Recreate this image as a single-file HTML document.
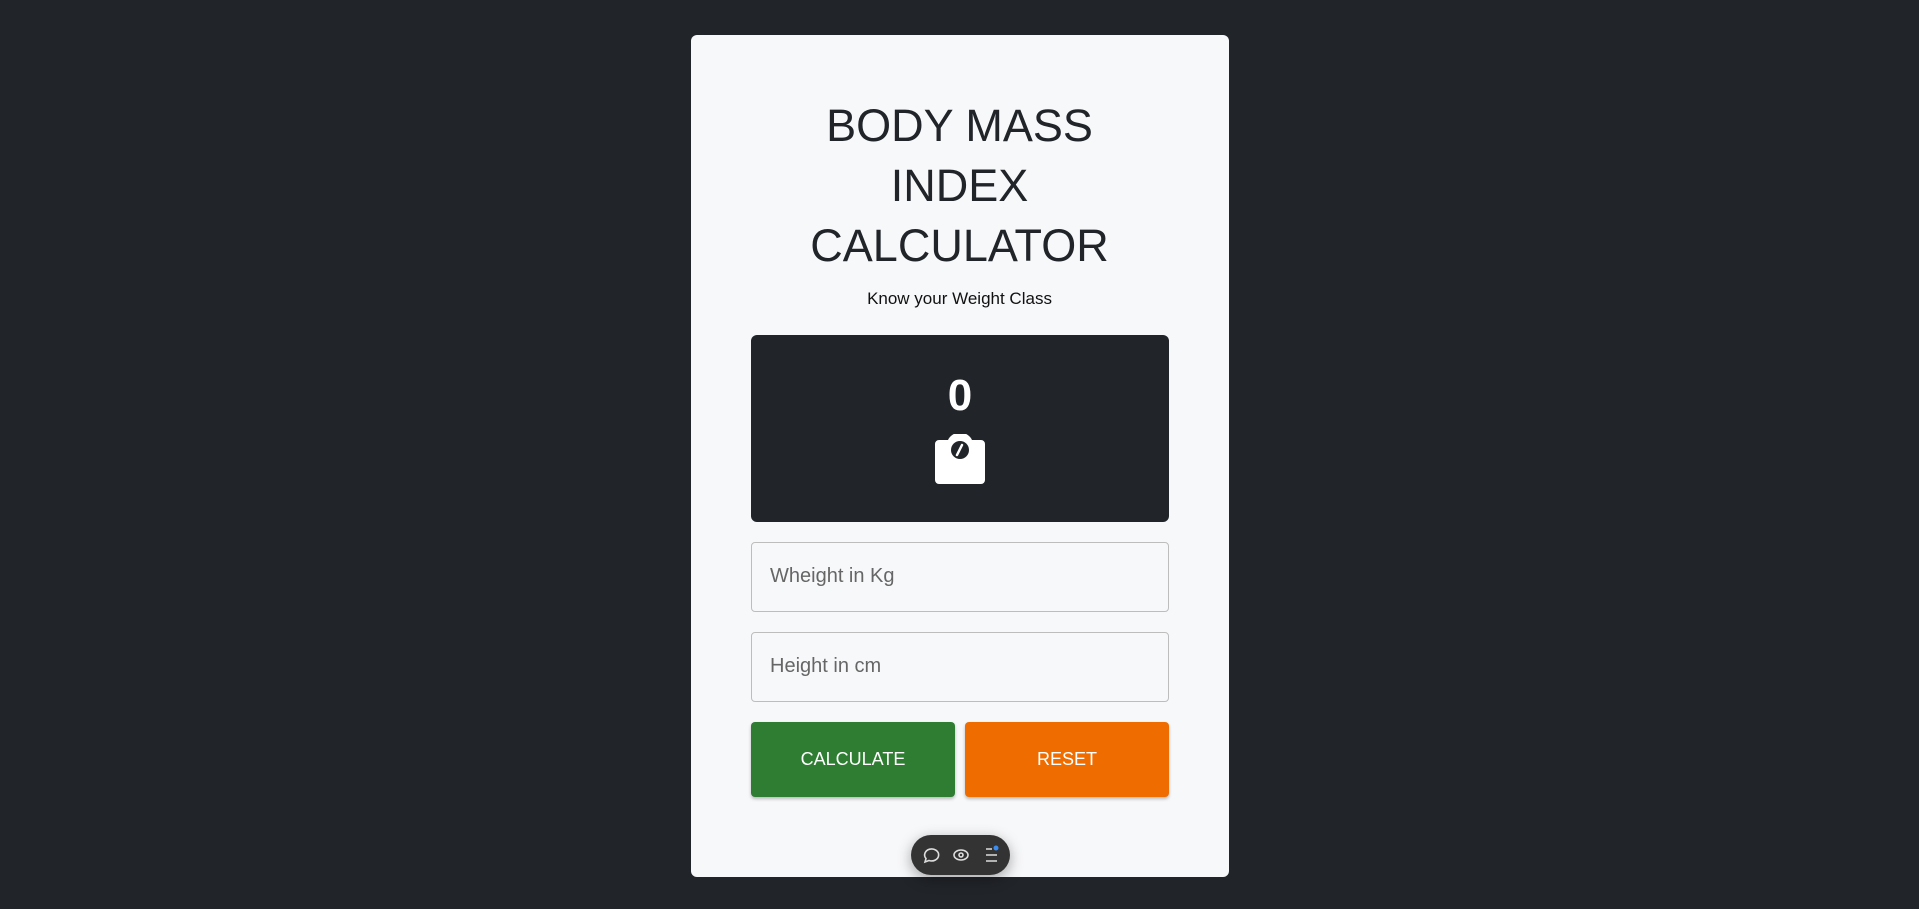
<!DOCTYPE html>
<html><head><meta charset="utf-8"><style>
html,body{margin:0;padding:0;width:1919px;height:909px;background:#212429;overflow:hidden;font-family:"Liberation Sans",sans-serif}
.card{position:absolute;left:691px;top:35px;width:538px;height:842px;background:#f7f8fa;border-radius:6px}
.t{position:absolute;left:0;width:1919px;text-align:center;color:#212429;font-size:45px;line-height:60px;top:96px}
.sub{position:absolute;left:0;width:1919px;text-align:center;top:289px;font-size:17px;color:#111}
.box{position:absolute;left:751px;top:335px;width:418px;height:187px;background:#212428;border-radius:6px}
.zero{position:absolute;left:0;width:418px;text-align:center;top:36px;color:#fff;font-size:44px;font-weight:bold}
.inp{position:absolute;left:751px;width:416px;height:68px;border:1px solid #bdbdbd;border-radius:4px;background:#f7f8fa;color:#666;font-size:20px;box-sizing:content-box}
.inp span{position:absolute;left:18px;top:22px}
.btn{position:absolute;top:722px;height:75px;border-radius:4px;color:#fff;font-size:18px;text-align:center;line-height:75px;box-shadow:0 2px 3px rgba(0,0,0,.25)}
.pill{position:absolute;left:911px;top:835px;width:99px;height:40px;border-radius:20px;background:#333;box-shadow:0 4px 14px rgba(0,0,0,.35)}
</style></head><body>
<div class="card"></div>
<div class="t">BODY MASS<br>INDEX<br>CALCULATOR</div>
<div class="sub">Know your Weight Class</div>
<div class="box"><div class="zero">0</div>
<svg style="position:absolute;left:184px;top:99px" width="50" height="50" viewBox="0 0 50 50">
<path d="M4 6 H13 A13 12 0 0 1 37 6 H46 A4 4 0 0 1 50 10 V46 A4 4 0 0 1 46 50 H4 A4 4 0 0 1 0 46 V10 A4 4 0 0 1 4 6Z" fill="#fff"/>
<circle cx="25" cy="16" r="9" fill="#212428"/>
<path d="M22 21 L27 11" stroke="#fff" stroke-width="2.5" stroke-linecap="round"/>
</svg></div>
<div class="inp" style="top:542px"><span>Wheight in Kg</span></div>
<div class="inp" style="top:632px"><span>Height in cm</span></div>
<div class="btn" style="left:751px;width:204px;background:#2e7d32">CALCULATE</div>
<div class="btn" style="left:965px;width:204px;background:#ef6c00">RESET</div>
<div class="pill">
<svg width="99" height="40" viewBox="0 0 99 40" fill="none" stroke="#ddd" stroke-width="1.6">
<path d="M14 27 L15 23.5 A7 6 0 1 1 18 25.5 Z"/>
<ellipse cx="50" cy="20" rx="7" ry="5"/><circle cx="50" cy="20" r="2"/>
<path d="M75 14 H81 M75 20 H86 M75 26 H86"/>
<circle cx="85" cy="13" r="2.5" fill="#3b8cf0" stroke="none"/>
</svg></div>
</body></html>
